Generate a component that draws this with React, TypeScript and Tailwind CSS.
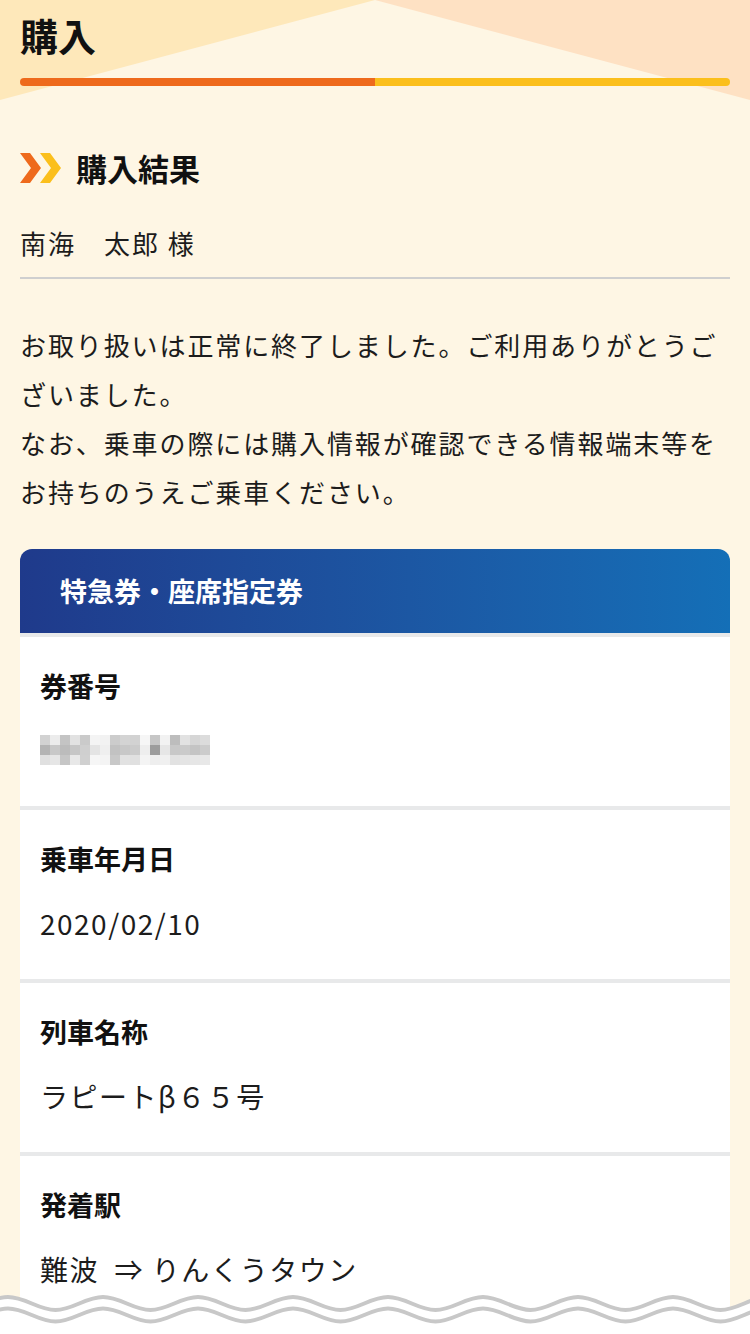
import React from "react";

const font = { fontFamily: '"Noto Sans CJK JP", "Noto Sans", sans-serif' };

const rows = [
  { label: "券番号", value: null },
  { label: "乗車年月日", value: "2020/02/10" },
  { label: "列車名称", value: "ラピートβ６５号" },
  { label: "発着駅", value: "難波  ⇒ りんくうタウン" },
];

// blurred ticket number, 17 x 3 cells of 10px
const mosaic = [
  ["#d2d2d2", "#ececec", "#c4c4c4", "#e2e2e2", "#cacaca", "#f4f4f4", "#f2f2f2", "#cccccc", "#d4d4d4", "#d2d2d2", "#f6f6f6", "#c6c6c6", "#f2f2f2", "#bdbdbd", "#e2e2e2", "#d6d6d6", "#dcdcdc"],
  ["#b4b4b4", "#c8c8c8", "#bcbcbc", "#c6c6c6", "#cfcfcf", "#e4e4e4", "#efefef", "#c2c2c2", "#c8c8c8", "#cbcbcb", "#eeeeee", "#9c9c9c", "#e6e6e6", "#c8c8c8", "#cacaca", "#c4c4c4", "#cccccc"],
  ["#e0e0e0", "#e6e6e6", "#c6c6c6", "#e8e8e8", "#d0d0d0", "#f6f6f6", "#f4f4f4", "#c8c8c8", "#e2e2e2", "#e0e0e0", "#f4f4f4", "#eeeeee", "#f0f0f0", "#e2e2e2", "#e4e4e4", "#e6e6e6", "#e8e8e8"],
];

const wavePath = (cy: number) => {
  const period = 95;
  const amp = 6.5;
  const start = 103 - period * 2;
  let d = `M ${start} ${cy - amp}`;
  for (let x = start; x < 800; x += period) {
    d += ` C ${x + period * 0.18} ${cy - amp}, ${x + period * 0.32} ${cy + amp}, ${x + period / 2} ${cy + amp}`;
    d += ` C ${x + period * 0.68} ${cy + amp}, ${x + period * 0.82} ${cy - amp}, ${x + period} ${cy - amp}`;
  }
  return d;
};

const Chevrons = () => (
  <svg width="42" height="30" viewBox="0 0 42 30">
    <polygon points="0,0 10,0 21,15 10,30 0,30 11,15" fill="#ee6a1c" />
    <polygon points="20,0 30,0 41,15 30,30 20,30 31,15" fill="#fbbf1c" />
  </svg>
);

const App = () => {
  return (
    <div
      className="relative w-[750px] h-[1334px] overflow-hidden bg-[#fef6e4] text-[#1c1c1c]"
      style={font}
    >
      <svg className="absolute left-0 top-0" width="750" height="100" viewBox="0 0 750 100">
        <polygon points="0,0 375,0 0,100" fill="#fee8ba" />
        <polygon points="375,0 750,0 750,100" fill="#fee1c3" />
      </svg>

      <div className="relative px-5">
        <h1 className="pt-[12px] text-[38px] leading-[46px] font-bold text-[#111]">購入</h1>
        <div className="mt-[20px] flex h-[8px] rounded-full overflow-hidden">
          <div className="w-1/2 bg-[#ee6a1c]" />
          <div className="w-1/2 bg-[#fbbf1c]" />
        </div>

        <div className="mt-[62px] flex items-center gap-[14px] h-[40px]">
          <Chevrons />
          <h2 className="text-[31px] font-bold leading-[40px] text-[#111]">購入結果</h2>
        </div>

        <p className="mt-[37px] pb-[16px] text-[26px] leading-[36px] tracking-[2px] border-b-2 border-[#cfcfcf]">
          南海　太郎 様
        </p>

        <p className="mt-[41px] text-[26px] leading-[49px] tracking-[1.9px] whitespace-nowrap">
          お取り扱いは正常に終了しました。ご利用ありがとうご
          <br />
          ざいました。
          <br />
          なお、乗車の際には購入情報が確認できる情報端末等を
          <br />
          お持ちのうえご乗車ください。
        </p>

        <div className="mt-[33px] rounded-t-[12px] overflow-hidden bg-[#e8e9ea] flex flex-col gap-[4px]">
          <div className="h-[84px] flex items-center pl-10 bg-gradient-to-r from-[#1f3a8b] to-[#146fb7]">
            <span className="text-white text-[27px] font-bold">特急券・座席指定券</span>
          </div>
          {rows.map((row, i) => (
            <div key={i} className="bg-white px-5 pt-[33px] pb-[38px]">
              <div className="text-[27px] leading-[32px] font-bold text-[#111]">{row.label}</div>
              {row.value ? (
                <div className="mt-[30px] text-[28px] leading-[36px] tracking-[1.5px] whitespace-pre">
                  {row.value}
                </div>
              ) : (
                <div className="mt-[30px] h-[36px] flex items-center">
                  <svg width="170" height="30" viewBox="0 0 170 30">
                    {mosaic.map((line, r) =>
                      line.map((c, k) => (
                        <rect key={`${r}-${k}`} x={k * 10} y={r * 10} width="10" height="10" fill={c} />
                      ))
                    )}
                  </svg>
                </div>
              )}
            </div>
          ))}
        </div>
      </div>

      <svg className="absolute left-0 bottom-0" width="750" height="44" viewBox="0 0 750 44">
        <path d={wavePath(13.5) + " L 800 44 L -200 44 Z"} fill="#ffffff" />
        <path d={wavePath(13.5)} fill="none" stroke="#c8c8c8" strokeWidth="4" />
        <path d={wavePath(25)} fill="none" stroke="#c8c8c8" strokeWidth="4" />
      </svg>
    </div>
  );
};

export default App;
